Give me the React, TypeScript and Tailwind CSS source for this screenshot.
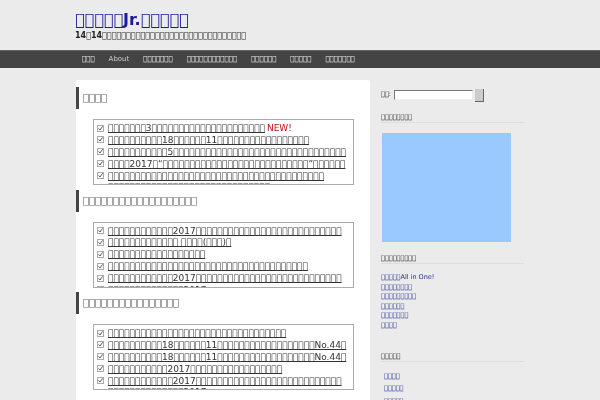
const X = "\uE000";
const t = (n: number) => X.repeat(n);

function Check() {
  return (
    <svg width="7" height="7" viewBox="0 0 7 7" className="shrink-0 mt-[2.5px]">
      <rect x="0.5" y="0.5" width="6" height="6" fill="#fff" stroke="#aaa" />
      <path d="M1.6 3.4 L3 5 L5.6 1.4" fill="none" stroke="#555" strokeWidth="1" />
    </svg>
  );
}

function Row({ text, isNew }: { text: string; isNew?: boolean }) {
  return (
    <li className="flex gap-[4px] h-[11.9px] leading-[12px] whitespace-nowrap">
      <Check />
      <span>
        <a className="underline [text-decoration-skip-ink:none] text-[#333]">{text}</a>
        {isNew && <b className="text-[#c01010] font-normal ml-[2px]">NEW!</b>}
      </span>
    </li>
  );
}

function Section({ title, rows }: { title: string; rows: { text: string; isNew?: boolean }[] }) {
  return (
    <section className="h-[102.5px]">
      <h2 className="h-[22px] border-l-[3px] border-[#444] pl-[4px] text-[10px] leading-[22px] text-[#666]">{title}</h2>
      <div className="ml-[17px] mt-[10px] w-[261px] h-[66px] border border-[#aaa] overflow-hidden pl-[3px] pt-[2px] text-[9px]">
        <ul>
          {rows.map((r, i) => (
            <Row key={i} {...r} />
          ))}
        </ul>
      </div>
    </section>
  );
}

const s1 = [
  { text: `${t(7)}3${t(21)}`, isNew: true },
  { text: `${t(10)}18${t(6)}11${t(17)}` },
  { text: `${t(11)}5${t(32)}` },
  { text: `${t(4)}2017${t(1)}\u201C${t(27)}\u201D${t(6)}` },
  { text: t(40) },
  { text: t(30) },
];
const s2 = [
  { text: `${t(12)}2017${t(27)}` },
  { text: `${t(13)} ${t(4)}(${t(3)})${t(1)}` },
  { text: t(18) },
  { text: t(37) },
  { text: `${t(12)}2017${t(27)}` },
  { text: `${t(14)}2017` },
];
const s3 = [
  { text: t(33) },
  { text: `${t(10)}18${t(6)}11${t(18)}No.44${t(1)}` },
  { text: `${t(10)}18${t(6)}11${t(18)}No.44${t(1)}` },
  { text: `${t(11)}2017${t(17)}` },
  { text: `${t(12)}2017${t(27)}` },
  { text: `${t(14)}2017` },
];

const nav = [t(3), "About", t(7), t(12), t(6), t(5), t(7)];
const links = [`${t(5)}All in One!`, t(8), t(9), t(6), t(7), t(4)];
const cats = [t(4), t(5), t(5)];

function WidgetTitle({ children }: { children: string }) {
  return <h3 className="border-b border-[#ddd] h-[11px] leading-[10px] text-[6.5px] text-[#222]">{children}</h3>;
}

export default function App() {
  return (
    <div className="h-[400px] w-[600px] overflow-hidden bg-[#ebebeb]">
      <div className="h-full [will-change:opacity] font-['DejaVu_Sans',sans-serif]">
        <header className="pl-[75px] pt-[10px] h-[50px]">
          <h1 className="text-[16px] leading-[19px] font-bold text-[#1a1a9c]">{`${t(5)}Jr.${t(5)}`}</h1>
          <p className="text-[8px] font-bold leading-[12px] mt-[1px] text-[#222]">{`14${t(1)}14${t(30)}`}</p>
        </header>
        <nav className="h-[18px] bg-[#444] border-t border-[#666] flex items-center pl-[82px] gap-[14px] text-[7px] text-[#eee]">
          {nav.map((n, i) => (
            <a key={i} className={n === "About" ? "text-[#ccc]" : ""}>{n}</a>
          ))}
        </nav>
        <main className="flex pl-[76px] pt-[12px]">
          <div className="w-[294px] h-[320px] bg-white rounded-t-[2px] pt-[7px] overflow-hidden">
            <Section title={t(4)} rows={s1} />
            <Section title={t(19)} rows={s2} />
            <Section title={t(16)} rows={s3} />
          </div>
          <aside className="ml-[11px] w-[143px]">
            <div className="flex items-center h-[14px] mt-[8px] text-[6.5px] text-[#222]">
              <span className="mr-[3px]">{`${t(2)}:`}</span>
              <input className="w-[79px] h-[10px] bg-white border border-[#777] border-r-[#eee] border-b-[#eee]" />
              <button className="ml-[2px] w-[9px] h-[13px] bg-[#ccc] border-r border-b border-[#666]" />
            </div>
            <div className="mt-[10px]">
              <WidgetTitle>{t(8)}</WidgetTitle>
            </div>
            <div className="mt-[10px] ml-px w-[129px] h-[109px] bg-[#99c9ff]" />
            <div className="mt-[11px]">
              <WidgetTitle>{t(9)}</WidgetTitle>
            </div>
            <ul className="mt-[9px] text-[6.5px] leading-[9.6px] text-[#1f2a8c]">
              {links.map((l, i) => (
                <li key={i}>{l}</li>
              ))}
            </ul>
            <div className="mt-[20px]">
              <WidgetTitle>{t(5)}</WidgetTitle>
            </div>
            <ul className="mt-[8px] pl-[3px] text-[6.5px] leading-[12.5px] text-[#1f2a8c]">
              {cats.map((l, i) => (
                <li key={i}>{l}</li>
              ))}
            </ul>
          </aside>
        </main>
      </div>
    </div>
  );
}
